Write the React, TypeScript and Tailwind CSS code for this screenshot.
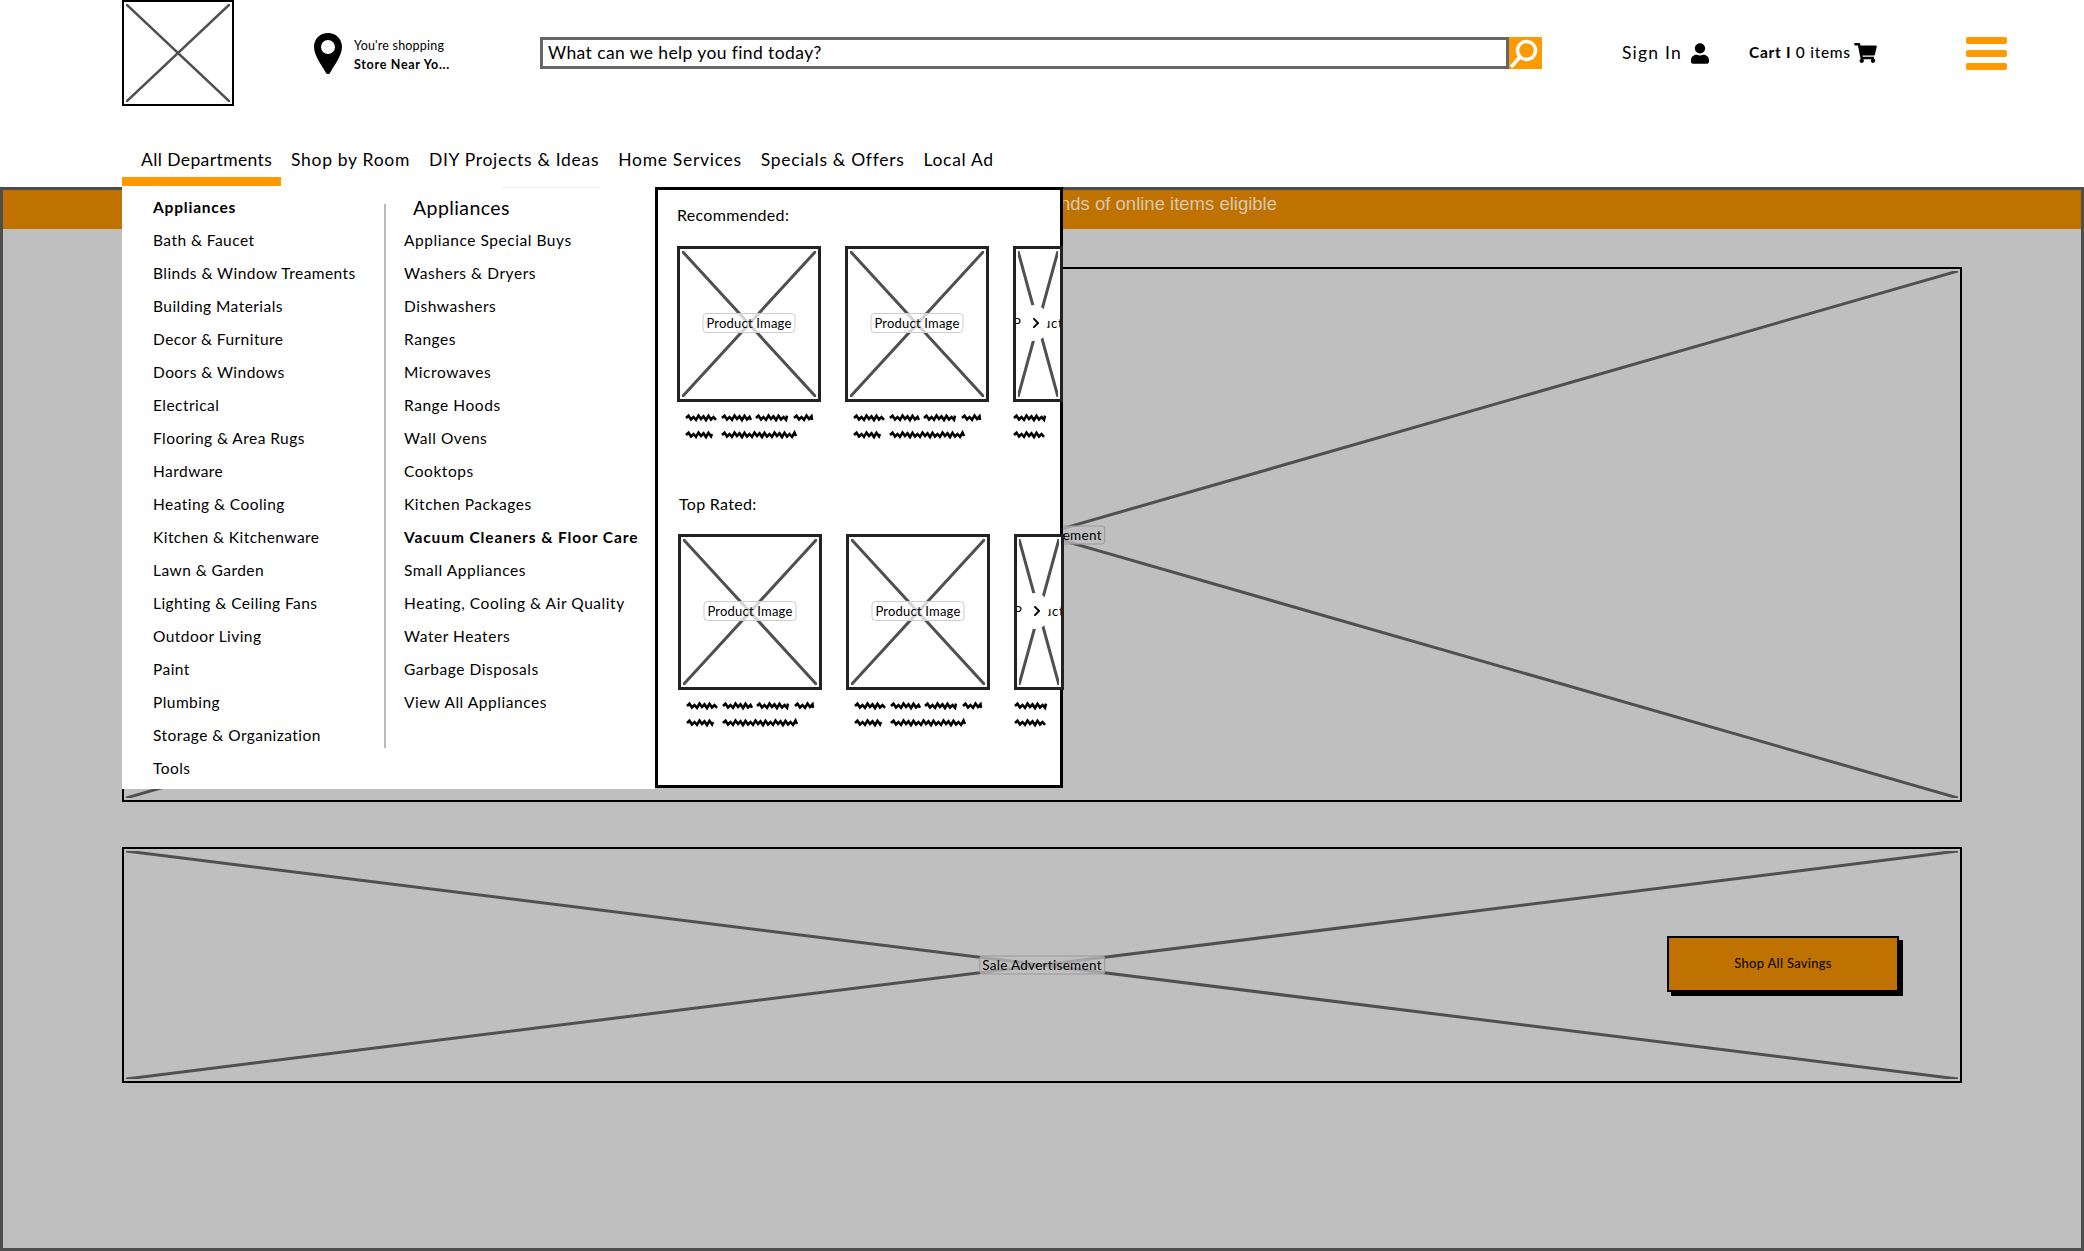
import { FaChevronRight, FaShoppingCart, FaUser } from "react-icons/fa"

const departments = [
  "Bath & Faucet",
  "Blinds & Window Treaments",
  "Building Materials",
  "Decor & Furniture",
  "Doors & Windows",
  "Electrical",
  "Flooring & Area Rugs",
  "Hardware",
  "Heating & Cooling",
  "Kitchen & Kitchenware",
  "Lawn & Garden",
  "Lighting & Ceiling Fans",
  "Outdoor Living",
  "Paint",
  "Plumbing",
  "Storage & Organization",
  "Tools",
]

const appliances = [
  "Appliance Special Buys",
  "Washers & Dryers",
  "Dishwashers",
  "Ranges",
  "Microwaves",
  "Range Hoods",
  "Wall Ovens",
  "Cooktops",
  "Kitchen Packages",
  "Vacuum Cleaners & Floor Care",
  "Small Appliances",
  "Heating, Cooling & Air Quality",
  "Water Heaters",
  "Garbage Disposals",
  "View All Appliances",
]

const navLinks = ["Shop by Room", "DIY Projects & Ideas", "Home Services", "Specials & Offers", "Local Ad"]

function CrossLines({ width }: { width: number }) {
  return (
    <svg className="absolute inset-[2px] h-[calc(100%-4px)] w-[calc(100%-4px)]" viewBox="0 0 100 100" preserveAspectRatio="none">
      <path d="M0 0L100 100M100 0L0 100" fill="none" stroke="#505050" strokeWidth={width} vectorEffect="non-scaling-stroke" />
    </svg>
  )
}

const wobble = [-2.2, 1.4, -1, 1.8, -2.4, 1, -1.6, 2]

function squiggle(from: number, to: number, y: number) {
  let d = `M${from} ${y}`
  let x = from
  let step = 0
  while (x < to) {
    x = Math.min(x + 2.5, to)
    d += `L${x} ${y + wobble[step % wobble.length]}`
    step += 1
  }
  return d
}

function Scribble({ lines, width }: { lines: number[][][]; width: number }) {
  return (
    <svg className="mt-[9px] block h-[30px]" style={{ width }} viewBox={`0 0 ${width} 30`}>
      {lines.map((words, row) =>
        words.map(([from, to]) => (
          <path key={`${row}-${from}`} d={squiggle(from, to, 7 + row * 17)} fill="none" stroke="#000" strokeWidth={2.6} />
        )),
      )}
    </svg>
  )
}

const fullText = [
  [[9, 39], [45, 74], [79, 110], [117, 135]],
  [[9, 35], [45, 119]],
]
const cutText = [[[1, 32]], [[1, 31]]]

function ProductCard() {
  return (
    <div className="w-[144px] shrink-0">
      <div className="relative h-[156px] border-[3px] border-[#222] bg-white">
        <CrossLines width={3} />
        <div className="absolute top-[calc(50%-1px)] left-1/2 -translate-x-1/2 -translate-y-1/2 rounded-[4px] border border-[#cccccc] bg-white/75 px-[3px] text-[13px] leading-[18px] tracking-[0.2px] whitespace-nowrap text-black">
          Product Image
        </div>
      </div>
      <Scribble lines={fullText} width={144} />
    </div>
  )
}

function CutCard() {
  return (
    <div className="w-[50px] shrink-0">
      <div className="relative h-[156px] overflow-hidden border-[3px] border-[#222] bg-white">
        <CrossLines width={3} />
        <div className="absolute top-[calc(50%-1px)] right-[-3px] left-[-3px] h-[17px] -translate-y-1/2 bg-white text-[13px] leading-[17px] tracking-[0.8px] whitespace-nowrap text-black">
          Product
        </div>
        <div className="absolute top-[calc(50%-1px)] left-1/2 -ml-[4px] flex h-[36px] w-[26px] -translate-x-1/2 -translate-y-1/2 items-center justify-center rounded-full bg-white">
          <FaChevronRight className="ml-[3px] h-[12px] w-[10px] text-black" />
        </div>
      </div>
      <Scribble lines={cutText} width={50} />
    </div>
  )
}

function ProductRow() {
  return (
    <div className="flex gap-[24px]">
      <ProductCard />
      <ProductCard />
      <CutCard />
    </div>
  )
}

function DropdownMenu() {
  return (
    <div className="absolute top-[-3px] left-[119px] z-10 flex">
      <div className="relative flex h-[602px] w-[533px] bg-white text-[15.5px] text-black">
        <div className="absolute top-0 left-[380px] h-px w-[98px] bg-[#eeeeee]" />
        <ul className="w-[262px] pt-[4px] pl-[31px]">
          <li className="flex h-[33px] items-center font-bold tracking-[0.8px]">Appliances</li>
          {departments.map((name) => (
            <li key={name} className="flex h-[33px] items-center tracking-[0.45px] whitespace-nowrap">
              {name}
            </li>
          ))}
        </ul>
        <div className="mt-[17px] h-[544px] w-[2px] bg-[#bbbbbb]" />
        <ul className="pt-[4px] pl-[18px]">
          <li className="ml-[9px] flex h-[33px] items-center text-[19.5px] tracking-[0.4px]">Appliances</li>
          {appliances.map((name) => (
            <li
              key={name}
              className={
                name.startsWith("Vacuum")
                  ? "flex h-[33px] items-center font-bold tracking-[0.9px] whitespace-nowrap"
                  : "flex h-[33px] items-center tracking-[0.55px] whitespace-nowrap"
              }
            >
              {name}
            </li>
          ))}
        </ul>
      </div>
      <div className="h-[601px] w-[408px] border-[3px] border-black bg-white pt-[13px] pl-[19px] text-black">
        <p className="text-[16px] leading-[24px] tracking-[0.3px]">Recommended:</p>
        <div className="mt-[19px]">
          <ProductRow />
        </div>
        <p className="mt-[51px] ml-[2px] text-[16px] leading-[24px] tracking-[0.3px]">Top Rated:</p>
        <div className="mt-[18px] ml-[1px]">
          <ProductRow />
        </div>
      </div>
    </div>
  )
}

function AdLabel() {
  return (
    <div className="absolute top-1/2 left-1/2 -translate-x-1/2 -translate-y-1/2 rounded-[3px] border border-[#999999] bg-[#bfbfbf]/75 px-[2px] text-[13.5px] leading-[17px] tracking-[0.3px] whitespace-nowrap text-black">
      Sale Advertisement
    </div>
  )
}

export default function App() {
  return (
    <div className="flex h-[1251px] w-full flex-col overflow-hidden bg-white font-['Lato',sans-serif] text-black">
      <header className="h-[187px] shrink-0">
        <div className="flex h-[106px] items-center pl-[122px]">
          <div className="relative h-[106px] w-[112px] shrink-0 border-2 border-black">
            <CrossLines width={2.5} />
          </div>
          <svg className="ml-[80px] h-[41px] w-[28px] shrink-0" viewBox="0 0 28 41">
            <path
              fillRule="evenodd"
              d="M14 0C6 0 0 6 0 14c0 9 9 20 12 26 1 1.500 3 1.500 4 0 3-6 12-17 12-26C28 6 22 0 14 0zM14 7a7 7 0 1 1 0 14a7 7 0 0 1 0-14z"
              fill="#000"
            />
          </svg>
          <div className="ml-[12px] w-[186px] shrink-0 pt-[3px]">
            <p className="text-[12.5px] leading-[20px] tracking-[0.2px]">You're shopping</p>
            <p className="text-[12.5px] leading-[18px] font-bold tracking-[0.7px]">Store Near Yo...</p>
          </div>
          <div className="flex h-[32px] w-[969px] shrink-0 items-center border-[3px] border-[#666666] pl-[5px] text-[17.5px] tracking-[0.4px]">
            What can we help you find today?
          </div>
          <div className="h-[32px] w-[33px] shrink-0 bg-[#ff9900]">
            <svg className="h-full w-full" viewBox="0 0 33 32">
              <circle cx="17.500" cy="13.500" r="9" fill="#ff9900" stroke="#fff" strokeWidth="3.500" />
              <path d="M11 20L2 30" stroke="#fff" strokeWidth="3.500" />
            </svg>
          </div>
          <span className="ml-[80px] w-[69px] shrink-0 text-[17.5px] tracking-[1.2px]">Sign In</span>
          <FaUser className="h-[21px] w-[18px] shrink-0" />
          <span className="ml-[40px] w-[105px] shrink-0 text-[15.5px] font-medium tracking-[0.7px] whitespace-nowrap">
            <b>Cart I</b> 0 items
          </span>
          <FaShoppingCart className="h-[20px] w-[23px] shrink-0" />
          <div className="ml-[89px] flex w-[41px] shrink-0 flex-col gap-[6px]">
            <div className="h-[7px] rounded-[2px] bg-[#ff9900]" />
            <div className="h-[7px] rounded-[2px] bg-[#ff9900]" />
            <div className="h-[7px] rounded-[2px] bg-[#ff9900]" />
          </div>
        </div>
        <nav className="flex pt-[42px] pl-[122px] text-[17.5px] leading-[24px] tracking-[0.7px]">
          <div className="mr-[10px] h-[38px] w-[159px] border-b-[9px] border-[#ff9900] pl-[19px] tracking-[0.4px] whitespace-nowrap">
            All Departments
          </div>
          <div className="flex gap-[19px] whitespace-nowrap">
            {navLinks.map((link) => (
              <a key={link}>{link}</a>
            ))}
          </div>
        </nav>
      </header>

      <main className="relative flex-1 border-[3px] border-[#4d4d4d] bg-[#bfbfbf]">
        <DropdownMenu />
        <div className="flex h-[39px] items-start justify-end bg-[#bf7200] pt-[2px] pr-[804px] font-['Liberation_Sans',sans-serif] text-[18.5px] leading-[24px] text-[#d8c8ae]">
          Free shipping on thousands of online items eligible
        </div>
        <div className="px-[119px]">
          <section className="relative mt-[38px] h-[535px] border-2 border-black">
            <CrossLines width={3} />
            <AdLabel />
          </section>
          <section className="relative mt-[45px] flex h-[236px] items-center justify-end border-2 border-black pr-[61px]">
            <CrossLines width={3} />
            <AdLabel />
            <button className="relative mb-[2px] h-[56px] w-[232px] border-2 border-black bg-[#bf7200] text-[13px] tracking-[0.3px] text-black shadow-[4px_4px_0_0_#000]">
              Shop All Savings
            </button>
          </section>
        </div>
      </main>
    </div>
  )
}
